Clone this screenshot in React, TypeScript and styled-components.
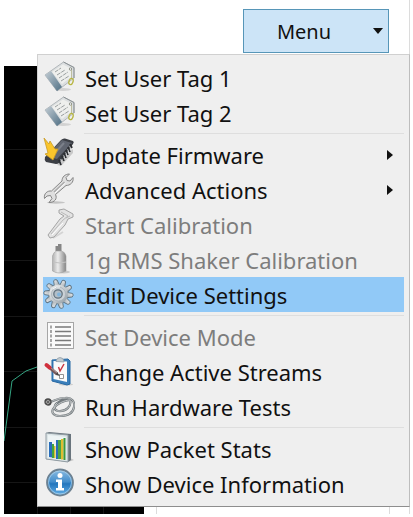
import React from 'react';
import styled, { createGlobalStyle } from 'styled-components';

const GlobalStyle = createGlobalStyle`
  * { box-sizing: border-box; }
  body { margin: 0; background: #fff; font-family: "Noto Sans", "Open Sans", sans-serif; }
`;

const Page = styled.div`
  position: relative;
  min-height: 100vh;
  display: flex;
  flex-direction: column;
  padding: 9px 0 3px;
  overflow: hidden;
`;

const Toolbar = styled.header`
  display: flex;
  justify-content: flex-end;
  padding-right: 24px;
`;

const MenuButton = styled.button`
  position: relative;
  width: 146px;
  height: 44px;
  padding: 0 24px 0 0;
  border: 1px solid #5796b8;
  background: #cce4f7;
  color: #111;
  font: 20px "Noto Sans", "Open Sans", sans-serif;
`;

const Caret = styled.svg`
  position: absolute;
  right: 5px;
  top: 18px;
  width: 10px;
  height: 6px;
`;

const Plot = styled.svg`
  flex: 1;
  width: 140px;
  margin: 13px 0 0 4px;
  background: #000;
`;

const SideRule = styled.div`
  position: absolute;
  top: 0;
  bottom: 3px;
  right: 3px;
  width: 1px;
  background: #dcdcdc;
`;

const LowerRule = styled(SideRule)`
  top: auto;
  right: 23px;
  height: 8px;
`;

const PlotRule = styled(LowerRule)`
  right: auto;
  left: 156px;
`;

const MenuPanel = styled.div`
  position: absolute;
  left: 37px;
  right: 3px;
  top: 54px;
  padding: 5px;
  border: 1px solid #d0d0d0;
  border-right-color: #bdbdbd;
  border-bottom: 1px solid #8e8e8e;
  background: #efefef;
`;

const Item = styled.button<{ $active?: boolean }>`
  display: flex;
  align-items: center;
  gap: 10px;
  width: 100%;
  height: 35px;
  padding: 0;
  border: 0;
  background: ${p => (p.$active ? '#91c9f7' : 'transparent')};
  color: #111;
  font: 22px/35px "Noto Sans", "Open Sans", sans-serif;
  text-align: left;
  white-space: nowrap;
  &:disabled { color: #7d7d7d; }
`;

const Label = styled.span`
  flex: 1;
  padding-top: 1px;
`;

const Icon = styled.svg`
  flex: none;
  width: 32px;
  height: 35px;
`;

const Arrow = styled.svg`
  flex: none;
  width: 6px;
  height: 10px;
  margin-right: 11px;
`;

const Separator = styled.hr`
  height: 1px;
  margin: 3px 0 3px 41px;
  border: 0;
  background: #dedede;
`;

const TagIcon = () => (
  <Icon viewBox="0 0 32 35" aria-hidden="true">
    <defs>
      <linearGradient id="tagEdge" x1="0" y1="0" x2="1" y2="1">
        <stop offset="0" stopColor="#c3cdd4" /><stop offset="1" stopColor="#4f6f84" />
      </linearGradient>
    </defs>
    <ellipse cx="20" cy="29.500" rx="8" ry="1.500" fill="#d2d2d2" />
    <path d="M2 15 20.500 2 31 7.500 31 18 14 31Z" fill="#dcdfe0" stroke="#a3a9ad" strokeWidth="0.800" />
    <path d="m9 12 11-7.500 8 4V17L19 24Z" fill="#eeefed" />
    <path d="M2 15 8 11 19 27 14 31Z" fill="url(#tagEdge)" />
    <path d="m12 12 6-4m-4 7 8-5m-6 8 9-6m-7 9 8-5" stroke="#999e9f" strokeDasharray="4 1" fill="none" />
    <path d="M20.500 2 31 7.500V18" stroke="#8b9194" fill="none" />
    <circle cx="27.500" cy="9" r="1.200" fill="#fff" stroke="#777c70" strokeWidth="0.800" />
    <path d="M28.500 10v9" stroke="#b5b58e" strokeWidth="0.800" />
    <ellipse cx="28" cy="21.500" rx="2" ry="3.200" fill="none" stroke="#b7b541" strokeWidth="1.300" transform="rotate(20 28 21.500)" />
  </Icon>
);

const ChipIcon = () => (
  <Icon viewBox="0 0 32 35" aria-hidden="true">
    <path d="m14 28 16-16v4L18 29Z" fill="#c9c9c9" />
    <path d="M2 20 18 3q2-2 4-1.500l8 2.500q1.500 1 0 3L16 26q-1 1-3 1L3 25Q1 23 2 20Z" fill="#3b3e44" />
    <path d="M3 19 19 3l10 3-15 16Z" fill="#606570" />
    <path d="m12 16 9-10" stroke="#7b808a" strokeWidth="2" />
    <path d="m16 23 2 5m1-9 2 5m0-8 2 5m0-8 2 5m0-8 2 5m0-8 2 4" stroke="#2b2d31" strokeWidth="1.800" />
    <path d="m17.500 22 2 5m1-9 2 5m0-8 2 5m0-8 2 5m0-8 2 5" stroke="#c5c8cc" strokeWidth="0.700" />
    <path d="m1 1 5 6 1-3 5 8 3 0-5 11-8-6 3-1Z" fill="#fac52b" stroke="#c99a25" strokeWidth="0.800" strokeLinejoin="round" />
  </Icon>
);

const WrenchIcon = () => (
  <Icon viewBox="0 0 32 35" aria-hidden="true">
    <ellipse cx="13" cy="30.500" rx="9" ry="1.200" fill="#c4c4c4" />
    <path d="M19 9c0-4 3-7 7.500-7l-3.500 3.500 1 3 3 .500 3-3.500c1 5-3 8-7 8L12.500 22.500c2 4-.500 8-6.500 8l3-4-1.500-3-3.500.500-2.500 2.500c-1-5 3-8 7-7.500Z" fill="#dfdfdf" stroke="#858585" strokeWidth="1" strokeLinejoin="round" />
    <path d="m11 20 10.500-10" stroke="#aaa" strokeWidth="1.500" />
    <path d="m12 21 10.500-10" stroke="#fff" strokeWidth="1" />
  </Icon>
);

const CaliperIcon = () => (
  <Icon viewBox="0 0 32 35" aria-hidden="true">
    <path d="m10 31 10-6" stroke="#d4d4d4" strokeWidth="2" />
    <path d="m16 3 5-1 9 5v3l-5 2-3 6L11 30l-4 1-2-3L17 12l4-3-5-3Z" fill="#e3e3e3" stroke="#a4a4a4" strokeLinejoin="round" />
    <path d="m8 27 12-14 5-4-7-4m5 6 4-2" fill="none" stroke="#bababa" />
    <path d="m9 28 11-12" stroke="#fff" />
  </Icon>
);

const BottleIcon = () => (
  <Icon viewBox="0 0 32 35" aria-hidden="true">
    <defs>
      <linearGradient id="bottleBody">
        <stop offset="0" stopColor="#b0b0b0" /><stop offset="0.400" stopColor="#ececec" /><stop offset="1" stopColor="#858585" />
      </linearGradient>
    </defs>
    <ellipse cx="21" cy="30" rx="6" ry="1.500" fill="#c9c9c9" />
    <path d="M12.500 4h2.500V2h3.500v7h-6Z" fill="#858585" />
    <path d="M9.500 14q1-4 4-5h5q3.500 1 4.500 5v15q-7 4-13.500 0Z" fill="url(#bottleBody)" stroke="#a0a0a0" strokeWidth="0.600" />
    <path d="M10 20q7 2 13 0" fill="none" stroke="#c2c2c2" />
  </Icon>
);

const GearIcon = () => (
  <Icon viewBox="0 0 32 35" aria-hidden="true">
    <defs>
      <linearGradient id="gearBody" x1="0" y1="0" x2="1" y2="1">
        <stop offset="0" stopColor="#eef0f1" /><stop offset="0.600" stopColor="#bfc5c9" /><stop offset="1" stopColor="#87939b" />
      </linearGradient>
    </defs>
    <g fill="url(#gearBody)" stroke="#5f7482" strokeWidth="0.900" strokeLinejoin="round">
      {[0, 36, 72, 108, 144, 180, 216, 252, 288, 324].map(angle => (
        <path key={angle} d="M13 9 13.500 3q1.500-1.500 3.500 0l1.500 6Z" transform={`rotate(${angle - 12} 15.500 17)`} />
      ))}
    </g>
    <circle cx="15.500" cy="17" r="9.500" fill="url(#gearBody)" />
    <circle cx="15.500" cy="17" r="7" fill="#ccd2d6" stroke="#a3adb4" strokeWidth="0.700" />
    <circle cx="15" cy="17" r="4.200" fill="#b2bec7" stroke="#647480" strokeWidth="1.300" />
    <circle cx="16" cy="17.500" r="2" fill="#82b5dc" />
    <path d="M10 12q3-3 7-2" fill="none" stroke="#f5f7f8" />
  </Icon>
);

const ListIcon = () => (
  <Icon viewBox="0 0 32 35" aria-hidden="true">
    <rect x="4.500" y="3.500" width="26" height="26" fill="#fafafa" stroke="#a6a6a6" />
    <path d="M12 8h16M12 12.500h16M12 17h16M12 21.500h16M12 26h16" stroke="#7a7a7a" strokeWidth="1.500" />
    <path d="M8 6.500v21" stroke="#8a8a8a" strokeWidth="1.500" strokeDasharray="3 1.500" />
  </Icon>
);

const ClipboardIcon = () => (
  <Icon viewBox="0 0 32 35" aria-hidden="true">
    <ellipse cx="23" cy="30.500" rx="7" ry="1" fill="#cdcdcd" />
    <path d="m9 6 16-1 2 2v23l-3 1-15-4Z" fill="#3b7fbb" stroke="#2668a3" strokeLinejoin="round" />
    <path d="m10.500 7 13.500.500v20.500l-13.500-3Z" fill="#fafafa" />
    <path d="M13 7q1-3.500 4-3.500t4 3.500v1l-8-.500Z" fill="#c3cbd0" stroke="#87959f" strokeWidth="0.700" />
    <path d="m15.500 13 1.500 4 4-7" fill="none" stroke="#c83843" strokeWidth="1.500" />
    <path d="M16.500 20.500h4v4h-4z" fill="#fff" stroke="#777" strokeWidth="0.800" />
    <path d="m6 13 8 7" stroke="#75595b" strokeWidth="3" />
    <path d="m6.500 12.500 7.500 6.500" stroke="#c0a5a7" strokeWidth="0.900" />
    <path d="m3.500 11 3 2.500" stroke="#d0303c" strokeWidth="4" strokeLinecap="round" />
    <path d="m14 18 3 4-4-1Z" fill="#494343" />
  </Icon>
);

const StethoscopeIcon = () => (
  <Icon viewBox="0 0 32 35" aria-hidden="true">
    <g fill="none" strokeLinecap="round">
      <path d="M6 13c6-1 8-4 16-4 7-1 10 4 9 9-1 7-8 9-14 9-6 0-9-3-7-7 3-5 12-9 17-9 2 6-4 12-12 11-4-1-5-5-1-8 5-4 11-5 14-3" stroke="#747b7f" strokeWidth="2.200" />
      <path d="M6 13c6-1 8-4 16-4 7-1 10 4 9 9-1 7-8 9-14 9-6 0-9-3-7-7 3-5 12-9 17-9 2 6-4 12-12 11-4-1-5-5-1-8" stroke="#c8cccd" strokeWidth="0.900" />
    </g>
    <circle cx="5" cy="13" r="3" fill="#9b9b9b" stroke="#474747" strokeWidth="1.300" />
    <path d="m3 11 4 4m0-4-4 4" stroke="#555" strokeWidth="0.800" />
  </Icon>
);

const ChartIcon = () => (
  <Icon viewBox="0 0 32 35" aria-hidden="true">
    <path d="m25 31 6-2-4-2Z" fill="#c5c5c5" />
    <path d="m3 2 3-1 22 2v26l-3 2-22-3Z" fill="#69747d" />
    <path d="m3 2 22 2v27L3 28Z" fill="#dce5e7" stroke="#929da4" />
    <path d="m5 4 18 2v23L5 26.500Z" fill="#eef4f5" />
    <path d="M6 11h3v15.500l-3-.500Z" fill="#286dbb" />
    <path d="M9 13h2v14H9Z" fill="#42a53c" /><path d="M11 15h1.500v12H11Z" fill="#d6bc32" />
    <path d="M13 9h2v19h-2Z" fill="#286dbb" /><path d="M15 9h3v19h-3Z" fill="#4aa345" />
    <path d="M18 8h2.500v20.500H18Z" fill="#dfbd31" /><path d="M20.500 7h2v22h-2Z" fill="#399840" />
  </Icon>
);

const InfoIcon = () => (
  <Icon viewBox="0 0 32 35" aria-hidden="true">
    <defs>
      <linearGradient id="infoBall" x1="0" y1="0" x2="0" y2="1">
        <stop offset="0" stopColor="#8bbce2" /><stop offset="0.480" stopColor="#438dcb" /><stop offset="0.550" stopColor="#2476bd" /><stop offset="1" stopColor="#65b1e8" />
      </linearGradient>
    </defs>
    <circle cx="17" cy="16.500" r="13" fill="url(#infoBall)" stroke="#6d8191" strokeWidth="1.800" />
    <circle cx="17" cy="16.500" r="11.500" fill="none" stroke="#acd0e9" strokeWidth="0.800" />
    <circle cx="17" cy="9.500" r="2.500" fill="#fff" />
    <path d="M13 13.500h6V22h2v2.500h-8V22h2v-6h-2Z" fill="#fff" />
  </Icon>
);

type Entry = { label: string; icon: React.FC; disabled?: boolean; active?: boolean; submenu?: boolean };

const groups: Entry[][] = [
  [
    { label: 'Set User Tag 1', icon: TagIcon },
    { label: 'Set User Tag 2', icon: TagIcon },
  ],
  [
    { label: 'Update Firmware', icon: ChipIcon, submenu: true },
    { label: 'Advanced Actions', icon: WrenchIcon, submenu: true },
    { label: 'Start Calibration', icon: CaliperIcon, disabled: true },
    { label: '1g RMS Shaker Calibration', icon: BottleIcon, disabled: true },
    { label: 'Edit Device Settings', icon: GearIcon, active: true },
  ],
  [
    { label: 'Set Device Mode', icon: ListIcon, disabled: true },
    { label: 'Change Active Streams', icon: ClipboardIcon },
    { label: 'Run Hardware Tests', icon: StethoscopeIcon },
  ],
  [
    { label: 'Show Packet Stats', icon: ChartIcon },
    { label: 'Show Device Information', icon: InfoIcon },
  ],
];

export default function App() {
  return (
    <>
      <GlobalStyle />
      <Page>
        <Toolbar>
          <MenuButton aria-haspopup="menu" aria-expanded="true">
            Menu
            <Caret viewBox="0 0 10 6" aria-hidden="true"><path d="M0 0h10L5 6Z" fill="#111" /></Caret>
          </MenuButton>
        </Toolbar>
        <Plot viewBox="0 0 140 448" preserveAspectRatio="xMinYMin slice" aria-hidden="true">
          <path d="M0 83.500h140M0 138.500h140M0 194.500h140M0 250.500h140M0 305.500h140M0 361.500h140M0 416.500h140M33.500 0v448M66.500 0v448M99.500 0v448" stroke="#161616" />
          <path d="m0 375 4-30 4-30 14-10 11-4" fill="none" stroke="#35a583" />
        </Plot>
        <SideRule />
        <LowerRule />
        <PlotRule />
        <MenuPanel role="menu">
          {groups.map((group, index) => (
            <React.Fragment key={index}>
              {index > 0 && <Separator />}
              {group.map(({ label, icon: Glyph, disabled, active, submenu }) => (
                <Item key={label} role="menuitem" disabled={disabled} $active={active}>
                  <Glyph />
                  <Label>{label}</Label>
                  {submenu && <Arrow viewBox="0 0 6 10" aria-hidden="true"><path d="M0 0v10l6-5Z" fill="#111" /></Arrow>}
                </Item>
              ))}
            </React.Fragment>
          ))}
        </MenuPanel>
      </Page>
    </>
  );
}
